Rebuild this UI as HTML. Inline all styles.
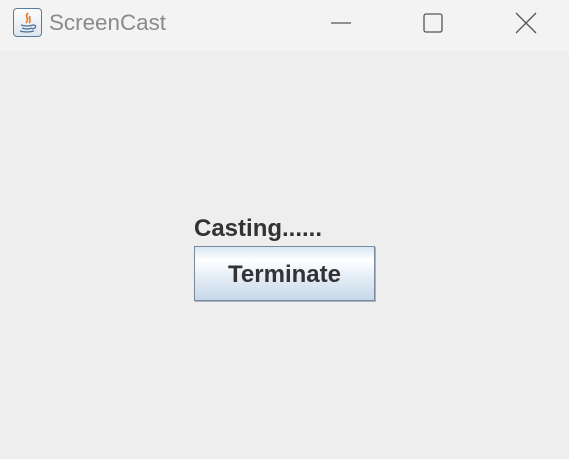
<!DOCTYPE html>
<html><head><meta charset="utf-8"><style>
html,body{margin:0;padding:0;}
body{width:569px;height:459px;background:#eeeeee;position:relative;overflow:hidden;font-family:"Liberation Sans",sans-serif;}
.tb{position:absolute;left:0;top:0;width:569px;height:51px;background:#f3f3f3;}
.title{position:absolute;left:49px;top:10px;font-size:22.4px;color:#8a8a8a;}
.icon{position:absolute;left:13px;top:8px;width:29px;height:29px;box-sizing:border-box;border:1px solid #5a7a9a;border-radius:4px;background:linear-gradient(#fdfdfd,#dfe6ee);}
.lbl{position:absolute;left:194px;top:215px;font-size:24px;font-weight:bold;color:#333;}
.btn{position:absolute;left:194px;top:246px;width:181px;height:55px;box-sizing:border-box;border:1px solid #7a8a9c;background:linear-gradient(#d9e6f3 0%,#ffffff 25%,#e6eef7 55%,#c8d8ea 100%);text-align:center;line-height:55px;font-size:24px;font-weight:bold;color:#333;box-shadow:1px 1px 0 #a8b4c0;}
</style></head><body>
<div class="tb">
 <div class="icon"><svg width="27" height="27" viewBox="0 0 27 27">
  <path d="M14 4 C10 8 16 9 12 14 M16 7 C14 10 18 11 15 14" stroke="#e87722" stroke-width="1.6" fill="none"/>
  <path d="M7 16 Q13 18 19 16 M8 19 Q13 21 18 19 M6 22 Q13 24 20 22" stroke="#4a6f97" stroke-width="1.3" fill="none"/>
  <path d="M19 16 q4 0 2 3 l-3 1" stroke="#4a6f97" stroke-width="1.2" fill="none"/>
 </svg></div>
 <div class="title">ScreenCast</div>
 <svg style="position:absolute;left:330px;top:12px" width="22" height="22"><line x1="1" y1="11" x2="21" y2="11" stroke="#555" stroke-width="1.3"/></svg>
 <svg style="position:absolute;left:422px;top:12px" width="22" height="22"><rect x="2" y="2" width="18" height="18" rx="2" fill="none" stroke="#555" stroke-width="1.3"/></svg>
 <svg style="position:absolute;left:515px;top:12px" width="22" height="22"><path d="M1 1 L21 21 M21 1 L1 21" stroke="#555" stroke-width="1.3"/></svg>
</div>
<div class="lbl">Casting......</div>
<div class="btn">Terminate</div>
</body></html>
